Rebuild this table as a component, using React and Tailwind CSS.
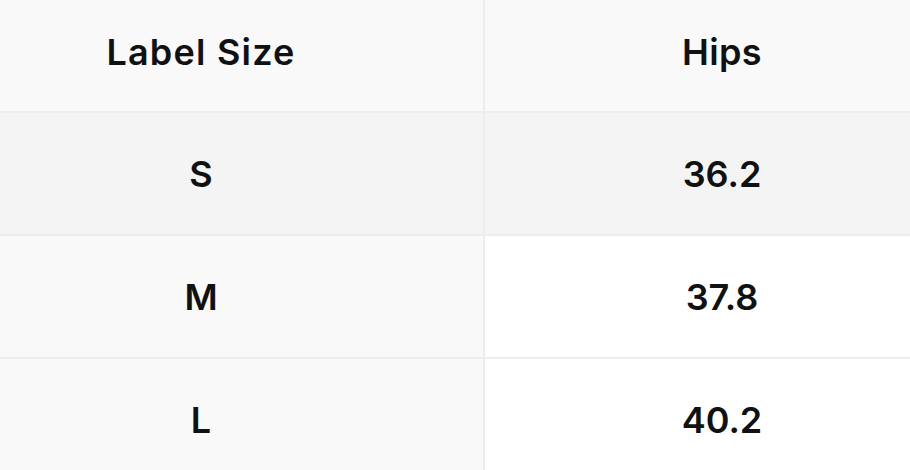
export default function App() {
  const rows = [
    { size: "S", hips: "36.2", bgL: "bg-[#f4f4f4]", bgR: "bg-[#f4f4f4]" },
    { size: "M", hips: "37.8", bgL: "bg-[#f9f9f9]", bgR: "bg-white" },
    { size: "L", hips: "40.2", bgL: "bg-[#f9f9f9]", bgR: "bg-white" },
  ];
  return (
    <div
      className="w-[910px] h-[470px] overflow-hidden bg-[#f9f9f9] text-[#111111]"
      style={{ fontFamily: "Inter, 'Liberation Sans', sans-serif" }}
    >
      <div className="grid grid-cols-[485px_1fr]">
        <div className="h-[113px] bg-[#f9f9f9] border-b-2 border-r-2 border-[#ededed] flex items-center justify-center pr-[81px] pb-2 text-[36px] font-semibold tracking-[1.2px]">
          Label Size
        </div>
        <div className="h-[113px] bg-[#f9f9f9] border-b-2 border-[#ededed] flex items-center justify-center pl-[49px] pb-2 text-[36px] font-semibold tracking-[0.4px]">
          Hips
        </div>
        {rows.map((r) => (
          <div key={r.size} className="contents">
            <div className={`h-[123px] ${r.bgL} border-b-2 border-r-2 border-[#ededed] flex items-center justify-center pr-[81px] text-[36px] font-semibold`}>
              {r.size}
            </div>
            <div className={`h-[123px] ${r.bgR} border-b-2 border-[#ededed] flex items-center justify-center pl-[49px] text-[36px] font-semibold`}>
              {r.hips}
            </div>
          </div>
        ))}
      </div>
    </div>
  );
}
